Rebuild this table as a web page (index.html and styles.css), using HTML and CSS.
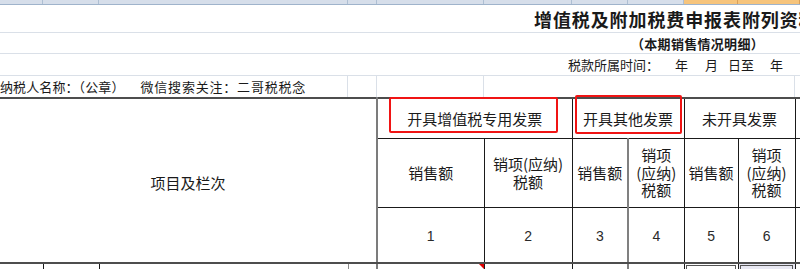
FILE: index.html
```html
<!DOCTYPE html>
<html lang="zh-CN">
<head>
<meta charset="utf-8">
<title>增值税及附加税费申报表附列资料（一）</title>
<link rel="stylesheet" href="styles.css">
</head>
<body>
<div class="sheet">
  <div class="colhead">
    <div class="ch w43"></div>
    <div class="ch w56"></div>
    <div class="ch w249"></div>
    <div class="ch w29"></div>
    <div class="ch w107"></div>
    <div class="ch w88"></div>
    <div class="ch w56"></div>
    <div class="ch w56"></div>
    <div class="ch w54 sel"></div>
    <div class="ch wrest sel"></div>
  </div>
  <div class="row r1"><span class="title">增值税及附加税费申报表附列资料（一）</span></div>
  <div class="row r2"><span class="subtitle">（本期销售情况明细）</span></div>
  <div class="row r3">
    <span class="period">税款所属时间：</span><span class="d1">年</span><span class="d2">月</span><span class="d3">日至</span><span class="d4">年</span>
  </div>
  <div class="row r4">
    <div class="gc g348"><span class="payer">纳税人名称：（公章）</span><span class="wx">微信搜索关注：二哥税税念</span></div>
    <div class="gc g29"></div>
    <div class="gc g107"></div>
    <div class="gc g311"></div>
    <div class="gc g5"></div>
  </div>
  <div class="tablewrap">
    <table class="grid">
      <colgroup>
        <col class="c43"><col class="c56"><col class="c249"><col class="c29">
        <col class="c107"><col class="c88"><col class="c56"><col class="c56">
        <col class="c54"><col class="c57"><col class="c5">
      </colgroup>
      <tr class="t1">
        <td colspan="4" rowspan="3" class="item lb">项目及栏次</td>
        <td colspan="2" class="grp">开具增值税专用发票</td>
        <td colspan="2" class="grp">开具其他发票</td>
        <td colspan="2" class="grp">未开具发票</td>
        <td class="edge"></td>
      </tr>
      <tr class="t2">
        <td class="hd">销售额</td>
        <td class="hd">销项(应纳)<br>税额</td>
        <td class="hd">销售额</td>
        <td class="hd gl">销项<br>(应纳)<br>税额</td>
        <td class="hd">销售额</td>
        <td class="hd">销项<br>(应纳)<br>税额</td>
        <td class="edge"></td>
      </tr>
      <tr class="t3">
        <td class="num">1</td>
        <td class="num">2</td>
        <td class="num">3</td>
        <td class="num gl">4</td>
        <td class="num">5</td>
        <td class="num">6</td>
        <td class="edge"></td>
      </tr>
      <tr class="t4">
        <td></td>
        <td></td>
        <td class="grey"></td>
        <td></td>
        <td class="noted lb"><span class="note"></span></td>
        <td></td>
        <td></td>
        <td class="gl"></td>
        <td class="picked"></td>
        <td class="picked tint"></td>
        <td></td>
      </tr>
    </table>
    <div class="mark m1"></div>
    <div class="mark m2"></div>
  </div>
</div>
</body>
</html>
```

FILE: styles.css
```css
html, body {
  margin: 0;
  padding: 0;
  background: #ffffff;
}
body {
  width: 800px;
  height: 269px;
  overflow: hidden;
  font-family: "Noto Sans CJK SC", "Noto Sans", sans-serif;
  color: #1a1a1a;
}
.sheet {
  width: 800px;
}
.colhead {
  display: flex;
  height: 5px;
  box-sizing: border-box;
  border-bottom: 1px solid #9fb3cb;
  background: #d6deea;
}
.ch {
  box-sizing: border-box;
  border-right: 1px solid #aebfd3;
  height: 4px;
}
.ch.sel {
  background: #f6c47c;
  border-right-color: #d9a05a;
}
.w43 { width: 43px; }
.w56 { width: 56px; }
.w249 { width: 249px; }
.w29 { width: 29px; }
.w107 { width: 107px; }
.w88 { width: 88px; }
.w54 { width: 54px; }
.wrest { flex: 1; }

.row {
  box-sizing: border-box;
  border-bottom: 1px solid #dae0e8;
  white-space: nowrap;
  overflow: hidden;
}
.r1 {
  height: 28px;
  padding-left: 534px;
  display: flex;
  align-items: center;
}
.title {
  font-size: 18px;
  font-weight: 700;
  letter-spacing: 0.9px;
  line-height: 1;
  margin-top: 1px;
}
.r2 {
  height: 21px;
  padding-left: 631px;
  display: flex;
  align-items: center;
}
.subtitle {
  font-size: 13px;
  font-weight: 700;
  line-height: 1;
  letter-spacing: 0.3px;
}
.r3 {
  height: 22px;
  padding-left: 568px;
  display: flex;
  align-items: center;
  font-size: 13px;
  line-height: 1;
}
.d1 { margin-left: 16px; }
.d2 { margin-left: 17px; }
.d3 { margin-left: 10px; }
.d4 { margin-left: 16px; }

.r4 {
  height: 21px;
  border-bottom: none;
  display: flex;
  overflow: visible;
}
.gc {
  box-sizing: border-box;
  height: 21px;
  border-right: 1px solid #dae0e8;
}
.g348 {
  width: 348px;
  font-size: 13px;
  line-height: 21px;
  display: flex;
}
.payer { letter-spacing: 0.1px; }
.wx { margin-left: 16px; letter-spacing: 0.8px; }
.g29 { width: 29px; }
.g107 { width: 107px; }
.g311 { width: 311px; }
.g5 { flex: 1; border-right: none; }

.tablewrap {
  position: relative;
  width: 800px;
}
.grid {
  width: 800px;
  table-layout: fixed;
  border-collapse: collapse;
  border-top: 2px solid #4d4d4d;
}
.c43 { width: 43px; }
.c56 { width: 56px; }
.c249 { width: 249px; }
.c29 { width: 29px; }
.c107 { width: 107px; }
.c88 { width: 88px; }
.c54 { width: 54px; }
.c57 { width: 57px; }
.c5 { width: 5px; }

.grid td {
  border: 1px solid #1a1a1a;
  padding: 0;
  text-align: center;
  vertical-align: middle;
  font-size: 15px;
  line-height: 17.5px;
  white-space: nowrap;
  overflow: hidden;
}
.grid td.item {
  border-left: none;
  border-right: 2px solid #7c7c7c;
  border-bottom: 2px solid #4d4d4d;
  padding-top: 4px;
}
.grid td.gl {
  border-left: 2px solid #808080;
}
.t1 { height: 40px; }
.t2 { height: 69px; }
.t3 { height: 56px; }
.t4 { height: 12px; }
.t3 td { border-bottom: 2px solid #4d4d4d; }
.grid td.edge {
  border-right: none;
}
.grid td.num {
  font-family: "Liberation Sans", "Noto Sans", sans-serif;
  font-size: 14px;
  color: #2a2a2a;
  padding-top: 4px;
}
.t4 td {
  border-top: none;
  border-bottom: none;
}
.t4 td:first-child { border-left: none; }
.grid td.grey {
  border-right-color: #8a8a8a;
}
.grid td.noted {
  border-left: 2px solid #7c7c7c;
  position: relative;
  overflow: visible;
}
.note {
  position: absolute;
  top: 0;
  right: 0;
  width: 0;
  height: 0;
  border-top: 5px solid #e00000;
  border-left: 5px solid transparent;
}
.grid td.picked {
  outline: 1px solid #555;
  outline-offset: -3px;
}
.grid td.tint {
  background: #e8e8f3;
}
.t4 td:last-child {
  border-right: none;
}

.mark {
  position: absolute;
  box-sizing: border-box;
  border: 2px solid #f01414;
  border-radius: 2px;
}
.m1 {
  left: 389px;
  top: 0px;
  width: 169px;
  height: 36px;
}
.m2 {
  left: 575px;
  top: -2px;
  width: 107px;
  height: 39px;
}
```
